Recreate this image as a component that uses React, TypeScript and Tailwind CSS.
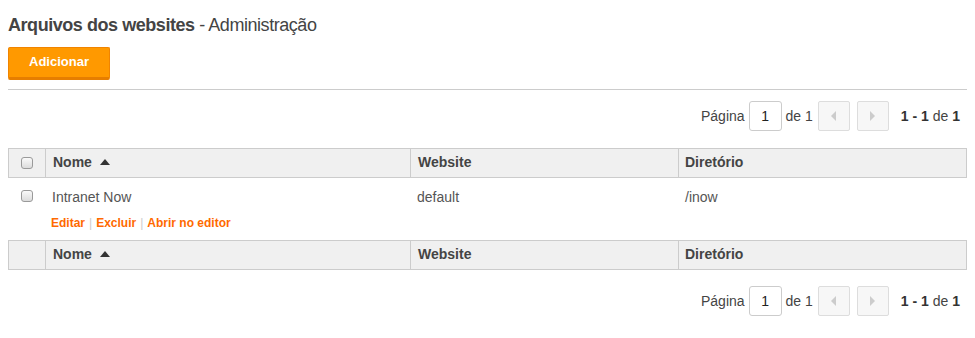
import React from "react";

const Checkbox = () => (
  <span className="inline-block w-[12px] h-[12px] rounded-[3px] border border-[#9a9a9a] bg-gradient-to-b from-[#fafafa] to-[#dcdcdc]" />
);

const SortUp = () => (
  <svg width="10" height="6" viewBox="0 0 10 6" className="inline-block ml-[8px] mb-[1px]">
    <path d="M0 6 L5 0 L10 6 Z" fill="#333" />
  </svg>
);

const Pager = () => (
  <div className="flex items-center justify-end pr-[7px] text-[14px] text-[#444]">
    <span>Página</span>
    <div className="ml-[4px] w-[33px] h-[30px] border border-[#ccc] rounded-[3px] flex items-center justify-center text-[#222] bg-white">1</div>
    <span className="ml-[4px]">de 1</span>
    <div className="ml-[5px] w-[32px] h-[30px] border border-[#ddd] rounded-[2px] bg-[#f7f7f7] flex items-center justify-center">
      <svg width="5" height="10" viewBox="0 0 5 10"><path d="M5 0 L0 5 L5 10 Z" fill="#ccc" /></svg>
    </div>
    <div className="ml-[7px] w-[32px] h-[30px] border border-[#ddd] rounded-[2px] bg-[#f7f7f7] flex items-center justify-center">
      <svg width="5" height="10" viewBox="0 0 5 10"><path d="M0 0 L5 5 L0 10 Z" fill="#ccc" /></svg>
    </div>
    <span className="ml-[12px]"><b className="text-[#333]">1 - 1</b> de <b className="text-[#333]">1</b></span>
  </div>
);

const HeaderRow = ({ checkbox }: { checkbox: boolean }) => (
  <div className="flex h-[30px] bg-[#f0f0f0] border border-[#ccc] text-[14px] font-bold text-[#444]">
    <div className="w-[37px] border-r border-[#ccc] flex items-center justify-center">{checkbox && <Checkbox />}</div>
    <div className="w-[365px] border-r border-[#ccc] flex items-center pl-[7px] pb-[1px]">
      Nome <SortUp />
    </div>
    <div className="w-[268px] border-r border-[#ccc] flex items-center pl-[7px] pb-[1px]">Website</div>
    <div className="flex-1 flex items-center pl-[6px] pb-[1px]">Diretório</div>
  </div>
);

export default function App() {
  return (
    <div className="bg-white w-[975px] h-[338px] px-[8px] pt-[13px] font-['Liberation_Sans',Arial,sans-serif]">
      <h1 className="text-[18px] text-[#444] leading-[24px] tracking-[-0.45px]">
        <span className="font-bold">Arquivos dos websites</span> - Administração
      </h1>
      <div className="mt-[10px]">
        <button className="w-[102px] h-[33px] bg-[#ff9900] border border-[#f08400] border-b-[3px] border-b-[#e67e00] rounded-[2px] text-white font-bold text-[13px] pb-[1px]">
          Adicionar
        </button>
      </div>
      <div className="mt-[9px] h-px bg-[#ccc]" />
      <div className="mt-[11px]">
        <Pager />
      </div>
      <div className="mt-[17px]">
        <HeaderRow checkbox />
        <div className="flex text-[14px] text-[#555] h-[62px]">
          <div className="w-[38px] flex justify-center pt-[12px]"><Checkbox /></div>
          <div className="w-[365px] pl-[6px] pt-[9px]">
            <div>Intranet Now</div>
            <div className="mt-[6px] text-[12px] font-bold text-[#ff6a00]">
              <span className="-ml-[1px]">Editar</span>
              <span className="text-[#ccc] font-normal mx-[4px]">|</span>
              <span>Excluir</span>
              <span className="text-[#ccc] font-normal mx-[4px]">|</span>
              <span>Abrir no editor</span>
            </div>
          </div>
          <div className="w-[268px] pl-[6px] pt-[9px]">default</div>
          <div className="flex-1 pl-[6px] pt-[9px]">/inow</div>
        </div>
        <HeaderRow checkbox={false} />
      </div>
      <div className="mt-[16px]">
        <Pager />
      </div>
    </div>
  );
}
